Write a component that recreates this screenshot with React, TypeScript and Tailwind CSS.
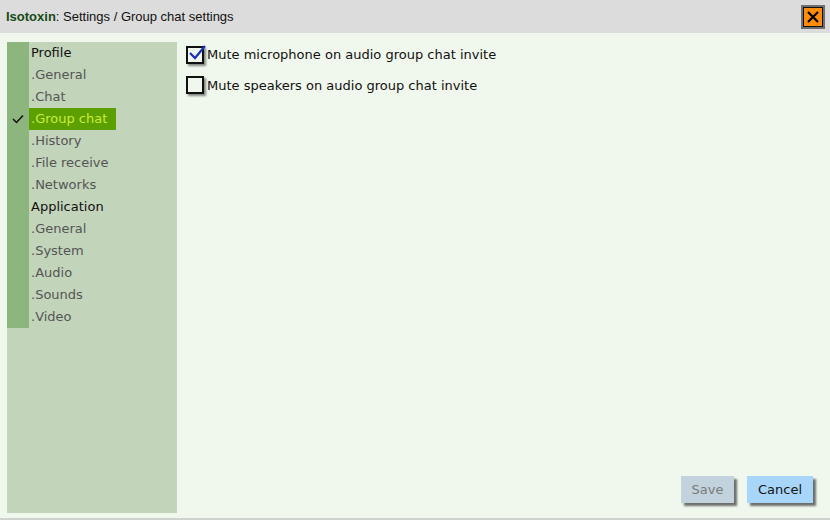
const menu = [
  { label: "Profile", head: true },
  { label: ".General" },
  { label: ".Chat" },
  { label: ".Group chat", active: true },
  { label: ".History" },
  { label: ".File receive" },
  { label: ".Networks" },
  { label: "Application", head: true },
  { label: ".General" },
  { label: ".System" },
  { label: ".Audio" },
  { label: ".Sounds" },
  { label: ".Video" },
];

function Check({ on }: { on?: boolean }) {
  return (
    <span className="relative w-[18px] h-[18px] shrink-0 border-2 border-[#111] bg-[#f0f7ec] shadow-[2px_2px_2px_rgba(0,0,0,0.45)]">
      {on && (
        <svg className="absolute -left-[1px] -top-[4px]" width="20" height="18" viewBox="0 0 20 18">
          <path d="M3 9 L8 14 L18 2" fill="none" stroke="#1a2fc0" strokeWidth="2.2" />
        </svg>
      )}
    </span>
  );
}

export default function App() {
  return (
    <div className="w-[830px] h-[520px] flex flex-col bg-[#f0f7ec] border-b-2 border-[#cfd3cf] font-['DejaVu_Sans',sans-serif] overflow-hidden">
      {/* title bar */}
      <div className="h-[33px] shrink-0 bg-[#dcdcdc] flex items-center justify-between pl-[6px] pr-[5px]">
        <div className="text-[13px] text-[#111] font-['Liberation_Sans',sans-serif]">
          <span className="font-bold text-[#174b17]">Isotoxin</span>: Settings / Group chat settings
        </div>
        <div className="w-[24px] h-[24px] border-2 border-[#6f6f6f] bg-[#111] p-[1px]">
          <div className="w-full h-full bg-[#ff8c0a] flex items-center justify-center">
            <svg width="14" height="14" viewBox="0 0 14 14">
              <path d="M2 2 L12 12 M12 2 L2 12" stroke="#000" strokeWidth="2.2" />
            </svg>
          </div>
        </div>
      </div>
      <div className="flex-1 flex pt-[9px] pl-[7px] pb-[5px]">
        {/* sidebar */}
        <div className="w-[170px] bg-[#c2d4ba] flex items-start">
          <div className="flex flex-col">
            {menu.map((m, i) => (
              <div key={i} className="flex h-[22px]">
                <div className="w-[22px] bg-[#8db57e] flex items-center justify-center">
                  {m.active && (
                    <svg width="12" height="10" viewBox="0 0 12 10">
                      <path d="M1 5 L4.5 8.5 L11 1.5" fill="none" stroke="#111" strokeWidth="1.5" />
                    </svg>
                  )}
                </div>
                <div
                  className={
                    m.active
                      ? "bg-[#5c9f00] text-[#c9ec3a] text-[13px] pl-[2px] pr-[9px] leading-[22px]"
                      : m.head
                      ? "text-[#111] text-[13px] pl-[2px] leading-[22px]"
                      : "text-[#555] text-[13px] pl-[2px] leading-[22px]"
                  }
                >
                  {m.label}
                </div>
              </div>
            ))}
          </div>
        </div>
        {/* content */}
        <div className="flex-1 flex flex-col pl-[9px] pr-[17px]">
          <div className="flex flex-col gap-[11px] pt-[3px]">
            <div className="flex items-center gap-[3px] text-[13px] text-[#111]">
              <Check on />
              <span>Mute microphone on audio group chat invite</span>
            </div>
            <div className="flex items-center gap-[3px] text-[13px] text-[#111]">
              <Check />
              <span>Mute speakers on audio group chat invite</span>
            </div>
          </div>
          <div className="mt-auto mb-[10px] flex justify-end gap-[13px]">
            <button className="w-[53px] h-[27px] bg-[#c3d3dd] text-[#7a7a7a] text-[13px] shadow-[3px_3px_2px_rgba(0,0,0,0.55)]">
              Save
            </button>
            <button className="w-[66px] h-[27px] bg-[#a8d6fa] text-[#111] text-[13px] shadow-[3px_3px_2px_rgba(0,0,0,0.55)]">
              Cancel
            </button>
          </div>
        </div>
      </div>
    </div>
  );
}
